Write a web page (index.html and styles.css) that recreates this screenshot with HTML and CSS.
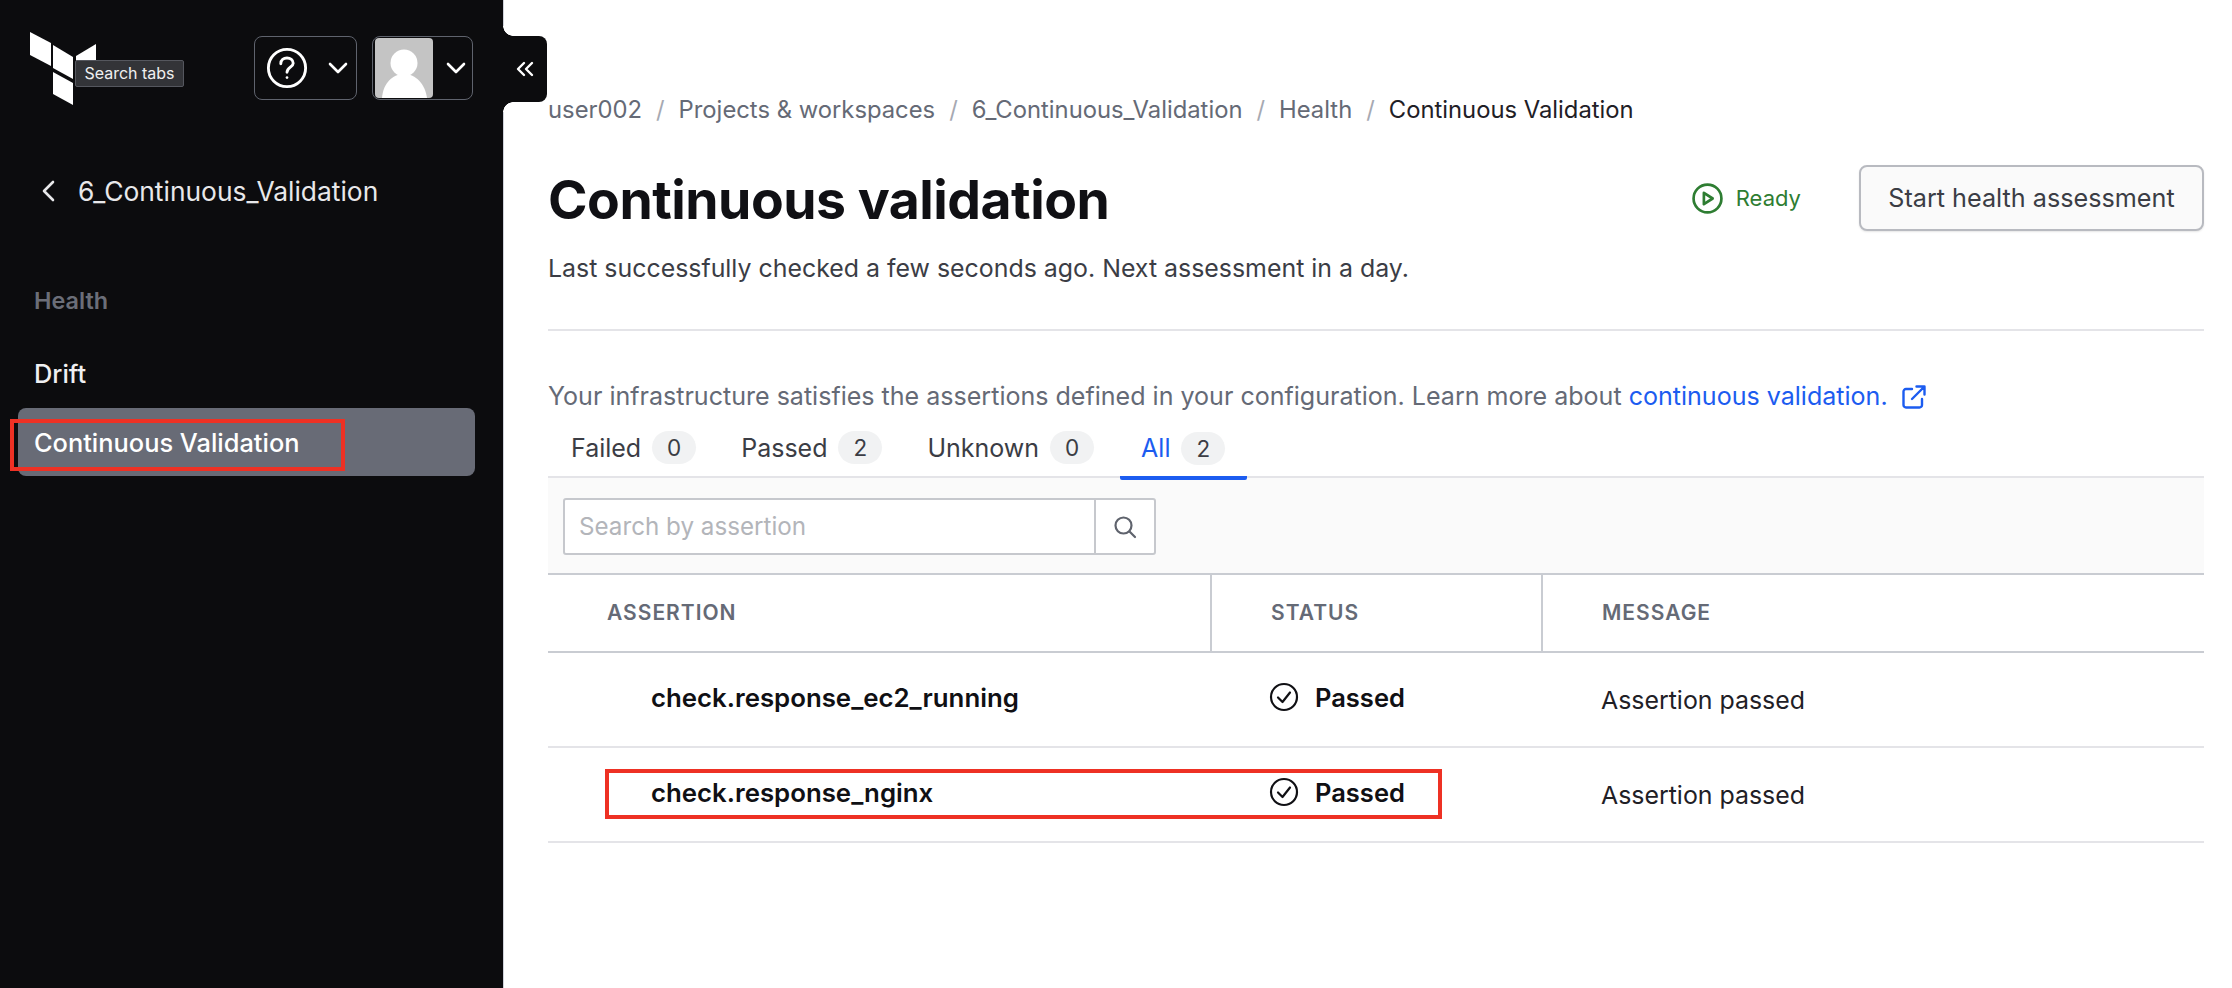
FILE: index.html
```html
<!DOCTYPE html>
<html lang="en">
<head>
    <meta charset="UTF-8">
    <title>Continuous validation</title>
    <link rel="stylesheet" href="styles.css">
</head>
<body>
    <aside class="sidebar">
        <div class="side-top">
            <div class="logo">
                <svg width="66" height="74" viewBox="0 0 66 74">
                    <path fill="#fff" d="M0 1 21 12V35L0 24Z"/>
                    <path fill="#fff" d="M23 14 43 26V48L23 37Z"/>
                    <path fill="#fff" d="M23 41 43 52V74L23 63Z"/>
                    <path fill="#fff" d="M46 25 66 13V36L46 47Z"/>
                </svg>
                <span class="tooltip">Search tabs</span>
            </div>
            <div class="top-buttons">
                <button class="top-btn help-btn" type="button">
                    <svg width="42" height="42" viewBox="0 0 44 44" fill="none" stroke="#fff" stroke-width="3">
                        <circle cx="22" cy="22" r="19.5"/>
                        <path stroke-linecap="round" d="M15.5 17.5C15.5 13.5 18.5 11.5 22 11.5C25.5 11.5 28.5 13.7 28.5 17C28.5 21 22 21.5 22 26.5"/>
                        <circle cx="22" cy="32" r="1.4" fill="#fff" stroke="none"/>
                    </svg>
                    <svg class="chev" width="20" height="12" viewBox="0 0 20 12" fill="none" stroke="#fff" stroke-width="2.6" stroke-linecap="round" stroke-linejoin="round"><path d="M2 2 10 10 18 2"/></svg>
                </button>
                <button class="top-btn user-btn" type="button">
                    <span class="avatar">
                        <svg width="58" height="60" viewBox="0 0 58 60">
                            <circle cx="29" cy="25" r="13.500" fill="#fff"/>
                            <path fill="#fff" d="M7 60C8 46 17 36 29 36C41 36 50 46 52 60Z"/>
                        </svg>
                    </span>
                    <svg class="chev" width="20" height="12" viewBox="0 0 20 12" fill="none" stroke="#fff" stroke-width="2.6" stroke-linecap="round" stroke-linejoin="round"><path d="M2 2 10 10 18 2"/></svg>
                </button>
            </div>
        </div>
        <div class="back-link">
            <svg width="14" height="22" viewBox="0 0 14 22" fill="none" stroke="#e8e8ea" stroke-width="2.6" stroke-linecap="round" stroke-linejoin="round"><path d="M12 2 3 11 12 20"/></svg>
            <span>6_Continuous_Validation</span>
        </div>
        <div class="side-heading">Health</div>
        <nav class="side-nav">
            <a class="side-item">Drift</a>
            <a class="side-item active">Continuous Validation</a>
        </nav>
    </aside>

    <div class="collapse-tab">
        <svg width="18" height="16" viewBox="0 0 18 16" fill="none" stroke="#fff" stroke-width="2.4" stroke-linecap="round" stroke-linejoin="round"><path d="M8 2 2 8 8 14M16 2 10 8 16 14"/></svg>
    </div>

    <main class="main">
        <div class="breadcrumb">
            <span>user002</span><i>/</i><span>Projects &amp; workspaces</span><i>/</i><span>6_Continuous_Validation</span><i>/</i><span>Health</span><i>/</i><span class="current">Continuous Validation</span>
        </div>

        <div class="page-head">
            <div>
                <h1>Continuous validation</h1>
                <p class="checked">Last successfully checked a few seconds ago. Next assessment in a day.</p>
            </div>
            <div class="head-actions">
                <span class="ready">
                    <svg width="33" height="33" viewBox="0 0 32 32" fill="none" stroke="#2e7d32" stroke-width="2.6" stroke-linejoin="round">
                        <circle cx="16" cy="16" r="13.5"/>
                        <path d="M12.5 10.5 21 16 12.5 21.5Z"/>
                    </svg>
                    Ready
                </span>
                <button class="start-btn" type="button">Start health assessment</button>
            </div>
        </div>

        <p class="intro">Your infrastructure satisfies the assertions defined in your configuration. Learn more about <a class="doc-link">continuous validation.
            <svg width="26" height="26" viewBox="0 0 26 26" fill="none" stroke="#1c5cf0" stroke-width="2.4" stroke-linecap="round" stroke-linejoin="round"><path d="M11 5H5A2.5 2.5 0 0 0 2.500 7.500V21A2.500 2.500 0 0 0 5 23.500H18.500A2.500 2.500 0 0 0 21 21V15M11 15 23.500 2.500M15.500 2.500H23.500V10.500"/></svg>
        </a></p>

        <div class="tabs">
            <a class="tab">Failed <b class="count">0</b></a>
            <a class="tab">Passed <b class="count">2</b></a>
            <a class="tab">Unknown <b class="count">0</b></a>
            <a class="tab selected">All <b class="count">2</b></a>
        </div>

        <div class="toolbar">
            <div class="search">
                <input type="text" placeholder="Search by assertion">
                <button type="button">
                    <svg width="24" height="24" viewBox="0 0 24 24" fill="none" stroke="#5f636d" stroke-width="2.2" stroke-linecap="round"><circle cx="10.500" cy="10.500" r="8"/><path d="M16.500 16.500 22 22"/></svg>
                </button>
            </div>
        </div>

        <table class="results">
            <thead>
                <tr><th>ASSERTION</th><th>STATUS</th><th>MESSAGE</th></tr>
            </thead>
            <tbody>
                <tr>
                    <td class="name">check.response_ec2_running</td>
                    <td class="status"><span>
                        <svg width="30" height="30" viewBox="0 0 30 30" fill="none" stroke="#101014" stroke-width="2.200" stroke-linecap="round" stroke-linejoin="round"><circle cx="15" cy="15" r="13"/><path d="M9 15.500 13.500 20 21 10.500"/></svg>
                        Passed</span></td>
                    <td class="msg">Assertion passed</td>
                </tr>
                <tr>
                    <td class="name">check.response_nginx</td>
                    <td class="status"><span>
                        <svg width="30" height="30" viewBox="0 0 30 30" fill="none" stroke="#101014" stroke-width="2.200" stroke-linecap="round" stroke-linejoin="round"><circle cx="15" cy="15" r="13"/><path d="M9 15.500 13.500 20 21 10.500"/></svg>
                        Passed</span></td>
                    <td class="msg">Assertion passed</td>
                </tr>
            </tbody>
        </table>
    </main>

    <!-- red annotation boxes on top of the page -->
    <div class="mark mark-nav"></div>
    <div class="mark mark-row"></div>
</body>
</html>
```

FILE: styles.css
```css
* {
    box-sizing: border-box;
}
body {
    font-family: Inter, "Noto Sans", sans-serif;
    margin: 0;
    height: 988px;
    overflow: hidden;
    display: flex;
    background-color: #ffffff;
    color: #101014;
}
.sidebar {
    width: 504px;
    flex-shrink: 0;
    background-color: #0c0c0e;
    color: #ffffff;
    padding: 31px 30px 0 18px;
    border-right: 1px solid #cfd2da;
}
.side-top {
    display: flex;
    justify-content: space-between;
    padding-left: 12px;
}
.logo {
    position: relative;
    height: 74px;
}
.logo svg {
    display: block;
}
.tooltip {
    position: absolute;
    left: 45px;
    top: 29px;
    width: 109px;
    height: 27px;
    background-color: #333438;
    border: 1px solid #55575e;
    border-radius: 2px;
    font-size: 16px;
    line-height: 25px;
    text-align: center;
    color: #f0f0f0;
    white-space: nowrap;
}
.top-buttons {
    display: flex;
    gap: 15px;
    padding-top: 5px;
}
.top-btn {
    height: 64px;
    display: flex;
    align-items: center;
    background: none;
    border: 1.500px solid #5f636d;
    border-radius: 8px;
    padding: 0;
}
.help-btn {
    width: 103px;
    padding-left: 11px;
    gap: 20px;
}
.user-btn {
    width: 101px;
    padding-left: 2px;
    gap: 13px;
}
.avatar {
    width: 58px;
    height: 60px;
    background-color: #c4c4c4;
    border-radius: 4px;
    overflow: hidden;
    display: block;
}
.avatar svg {
    display: block;
}
.back-link {
    display: flex;
    align-items: center;
    gap: 23px;
    margin-top: 66px;
    padding-left: 23px;
    font-size: 26.400px;
    line-height: 40px;
    color: #e8e8ea;
}
.side-heading {
    margin-top: 70px;
    padding-left: 16px;
    font-size: 23.400px;
    font-weight: 600;
    line-height: 40px;
    color: #6b6e78;
}
.side-nav {
    margin-top: 33px;
    margin-right: -2px;
}
.side-item {
    display: block;
    height: 68px;
    padding-left: 16px;
    border-radius: 8px;
    font-size: 25.400px;
    font-weight: 500;
    line-height: 69px;
    color: #f0f0f2;
}
.side-item:first-child {
    height: 39px;
    line-height: 39px;
    margin-bottom: 15px;
}
.side-item.active {
    background-color: #686b76;
    color: #ffffff;
}
.collapse-tab {
    position: absolute;
    left: 503px;
    top: 36px;
    width: 44px;
    height: 66px;
    background-color: #0c0c0e;
    border-radius: 0 8px 8px 0;
    display: flex;
    align-items: center;
    justify-content: center;
}
/* inverse corners where the tab meets the sidebar */
.collapse-tab::before, .collapse-tab::after {
    content: "";
    position: absolute;
    left: 0;
    width: 10px;
    height: 10px;
}
.collapse-tab::before {
    top: -10px;
    background: radial-gradient(circle at 100% 0, #ffffff 9.500px, #0c0c0e 10px);
}
.collapse-tab::after {
    bottom: -10px;
    background: radial-gradient(circle at 100% 100%, #ffffff 9.500px, #0c0c0e 10px);
}
.main {
    flex-grow: 1;
    padding: 93px 28px 0 44px;
}
.breadcrumb {
    display: flex;
    font-size: 23.800px;
    line-height: 34px;
    color: #656a76;
}
.breadcrumb i {
    font-style: normal;
    margin: 0 14px;
    color: #a6a9b2;
}
.breadcrumb .current {
    color: #1f2026;
}
.page-head {
    display: flex;
    justify-content: space-between;
    margin-top: 37px;
    padding-bottom: 42px;
    border-bottom: 2px solid #e4e4e8;
}
h1 {
    font-size: 53.500px;
    font-weight: 700;
    line-height: 72px;
    margin: 0;
    letter-spacing: -0.500px;
}
.checked {
    margin: 13px 0 0;
    font-size: 24.900px;
    line-height: 38px;
    color: #3b3d45;
}
.head-actions {
    display: flex;
    align-items: flex-start;
    gap: 58px;
    padding-top: 1px;
}
.ready {
    display: flex;
    align-items: center;
    gap: 12px;
    height: 66px;
    font-size: 22px;
    color: #2e7d32;
}
.start-btn {
    width: 345px;
    height: 66px;
    font-family: inherit;
    font-size: 25.200px;
    color: #3b3d45;
    background-color: #fafafa;
    border: 2px solid #b8bac0;
    border-radius: 8px;
    box-shadow: 0 1px 2px rgba(0, 0, 0, 0.1);
}
.intro {
    margin: 47px 0 0;
    font-size: 25.050px;
    line-height: 36px;
    color: #656a76;
}
.doc-link {
    color: #1c5cf0;
}
.doc-link svg {
    vertical-align: -5px;
    margin-left: 6px;
}
.tabs {
    display: flex;
    height: 64px;
    padding-top: 6px;
    padding-left: 7px;
    border-bottom: 2px solid #e4e4e8;
}
.tab {
    display: flex;
    align-items: center;
    gap: 11px;
    height: 55px;
    padding: 0 16px;
    margin-right: 13px;
    font-size: 25px;
    color: #3b3d45;
}
.count {
    width: 44px;
    height: 33px;
    font-size: 22.500px;
    font-weight: 400;
    line-height: 33px;
    text-align: center;
    border-radius: 17px;
    background-color: #f1f2f3;
}
.tab.selected {
    height: 60px;
    padding: 0 22px 0 21px;
    margin-left: -3px;
    margin-right: 0;
    color: #1c5cf0;
    border-bottom: 4px solid #1c5cf0;
    border-radius: 0 0 2px 2px;
}
.tab.selected .count {
    color: #3b3d45;
}
.toolbar {
    height: 97px;
    padding: 20px 15px 0;
    background-color: #fafafa;
    border-bottom: 2px solid #c9ccd2;
}
.search {
    display: flex;
    width: 593px;
    height: 57px;
    background-color: #ffffff;
    border: 2px solid #c6c8cd;
    border-radius: 3px;
}
.search input {
    flex-grow: 1;
    min-width: 0;
    border: none;
    outline: none;
    padding: 0 14px;
    font-family: inherit;
    font-size: 24.200px;
    background: none;
}
.search input::placeholder {
    color: #b3b5ba;
}
.search button {
    width: 60px;
    border: none;
    border-left: 2px solid #c6c8cd;
    background: none;
    padding: 3px 0 0;
}
.results {
    width: 100%;
    border-collapse: collapse;
    table-layout: fixed;
}
.results th {
    height: 77px;
    padding: 0 0 1px 59px;
    text-align: left;
    font-size: 21px;
    font-weight: 600;
    letter-spacing: 1px;
    color: #656a76;
    border-bottom: 2px solid #c9ccd2;
    border-right: 2px solid #c9ccd2;
}
.results th:first-child {
    width: 663px;
}
.results th:nth-child(2) {
    width: 331px;
}
.results th:last-child {
    border-right: none;
}
.results td {
    height: 95px;
    padding: 0 0 0 59px;
    font-size: 24.900px;
    border-bottom: 2px solid #e4e4e8;
}
.results .name {
    padding-left: 103px;
    font-size: 25.800px;
    font-weight: 600;
    padding-bottom: 5px;
}
.results .status {
    padding-left: 58px;
    font-size: 25.500px;
    font-weight: 600;
    padding-bottom: 5px;
}
.status span {
    display: flex;
    align-items: center;
    gap: 16px;
}
.results .msg {
    color: #1f2026;
    padding-top: 1px;
}
.mark {
    position: absolute;
    border: 4px solid #ee3124;
}
.mark-nav {
    left: 10px;
    top: 419px;
    width: 335px;
    height: 52px;
}
.mark-row {
    left: 605px;
    top: 769px;
    width: 837px;
    height: 50px;
}
```
